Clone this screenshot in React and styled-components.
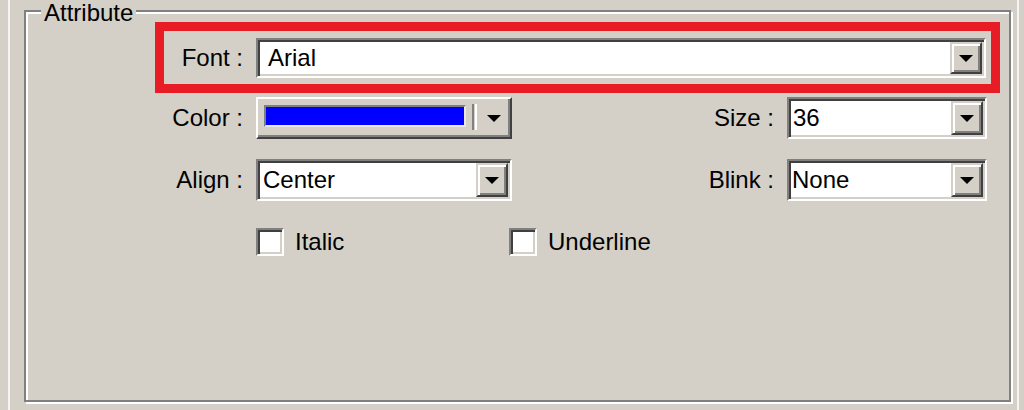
import styled, { createGlobalStyle } from 'styled-components';

const GlobalStyle = createGlobalStyle`
  html, body {
    margin: 0;
    background: #d4d0c8;
  }
  body {
    font-family: "Liberation Sans", Arial, sans-serif;
    font-size: 24px;
    color: #000;
  }
`;

const Window = styled.div`
  box-sizing: border-box;
  width: 1011px;
  height: 410px;
  margin-left: 8px;
  padding: 0 6px 0 14px;
  border-left: 2px solid #f5f4f0;
  border-right: 2px solid #f5f4f0;
`;

const Group = styled.fieldset`
  box-sizing: border-box;
  height: 402px;
  margin: 0;
  padding: 0;
  min-width: 0;
  border: 2px solid #808080;
  box-shadow: inset 2px 2px 0 #fff, 2px 2px 0 #fff;
`;

const Legend = styled.legend`
  margin-left: 15px;
  padding: 4px 3px 0;
  line-height: 18px;
  background: #d4d0c8;
`;

const Highlight = styled.div`
  display: flex;
  align-items: center;
  gap: 13px;
  margin: 0 9px 0 129px;
  padding: 7px 5px 6px 0;
  border: 9px solid #e81c24;
`;

const Row = styled.div`
  display: flex;
  align-items: center;
  gap: 13px;
  margin: ${p => p.$top}px 22px 0 138px;
`;

const Label = styled.span`
  width: ${p => p.$width || 79}px;
  text-align: right;
  white-space: nowrap;
`;

const Spacer = styled.div`
  flex: 1;
`;

const Combo = styled.div`
  box-sizing: border-box;
  display: flex;
  flex: ${p => (p.$grow ? 1 : 'none')};
  width: ${p => (p.$width ? `${p.$width}px` : 'auto')};
  height: ${p => p.$height}px;
  padding: 2px;
  background: #fff;
  border: 2px solid;
  border-color: #808080 #fff #fff #808080;
  box-shadow: inset 2px 2px 0 #404040, inset -2px -2px 0 #d4d0c8;
`;

const Value = styled.span`
  flex: 1;
  display: flex;
  align-items: center;
  padding-left: ${p => p.$indent}px;
  white-space: nowrap;
`;

const DropButton = styled.div`
  box-sizing: border-box;
  width: 32px;
  display: flex;
  align-items: center;
  justify-content: center;
  background: #d4d0c8;
  border: 2px solid;
  border-color: #d4d0c8 #404040 #404040 #d4d0c8;
  box-shadow: inset 2px 2px 0 #fff, inset -2px -2px 0 #808080;
`;

const Arrow = styled.span`
  width: 0;
  height: 0;
  border-top: 7px solid #000;
  border-left: 7px solid transparent;
  border-right: 7px solid transparent;
`;

const ColorButton = styled.div`
  box-sizing: border-box;
  display: flex;
  align-items: center;
  width: 256px;
  height: 42px;
  padding-left: 6px;
  background: #d4d0c8;
  border: 2px solid;
  border-color: #fff #404040 #404040 #fff;
  box-shadow: inset -2px -2px 0 #808080;
`;

const Swatch = styled.span`
  box-sizing: border-box;
  width: 202px;
  height: 22px;
  margin-bottom: 4px;
  background: ${p => p.$color};
  border: 2px solid;
  border-color: #808080 #e8e8e8 #e8e8e8 #808080;
`;

const Separator = styled.span`
  width: 1px;
  height: 26px;
  margin: 0 0 2px 6px;
  border-left: 2px solid #808080;
  border-right: 2px solid #fff;
`;

const ArrowSlot = styled.span`
  flex: 1;
  display: flex;
  justify-content: center;
`;

const CheckRow = styled.div`
  display: flex;
  align-items: center;
  margin: 27px 0 0 230px;
`;

const CheckItem = styled.label`
  display: flex;
  align-items: center;
  gap: 11px;
  width: ${p => p.$width}px;
`;

const Box = styled.span`
  box-sizing: border-box;
  width: 28px;
  height: 28px;
  background: #fff;
  border: 2px solid;
  border-color: #808080 #fff #fff #808080;
  box-shadow: inset 2px 2px 0 #404040, inset -2px -2px 0 #d4d0c8;
`;

const Select = ({ value, width, grow, height = 42, indent = 2 }) => (
  <Combo $width={width} $grow={grow} $height={height}>
    <Value $indent={indent}>{value}</Value>
    <DropButton>
      <Arrow />
    </DropButton>
  </Combo>
);

const App = () => (
  <>
    <GlobalStyle />
    <Window>
      <Group>
        <Legend>Attribute</Legend>

        <Highlight>
          <Label>Font :</Label>
          <Select value="Arial" grow height={40} indent={8} />
        </Highlight>

        <Row $top={4}>
          <Label>Color :</Label>
          <ColorButton>
            <Swatch $color="#0000ff" />
            <Separator />
            <ArrowSlot>
              <Arrow />
            </ArrowSlot>
          </ColorButton>
          <Spacer />
          <Label $width={60}>Size :</Label>
          <Select value="36" width={200} />
        </Row>

        <Row $top={20}>
          <Label>Align :</Label>
          <Select value="Center" width={256} indent={3} />
          <Spacer />
          <Label $width={70}>Blink :</Label>
          <Select value="None" width={200} indent={1} />
        </Row>

        <CheckRow>
          <CheckItem $width={253}>
            <Box />
            Italic
          </CheckItem>
          <CheckItem>
            <Box />
            Underline
          </CheckItem>
        </CheckRow>
      </Group>
    </Window>
  </>
);

export default App;
